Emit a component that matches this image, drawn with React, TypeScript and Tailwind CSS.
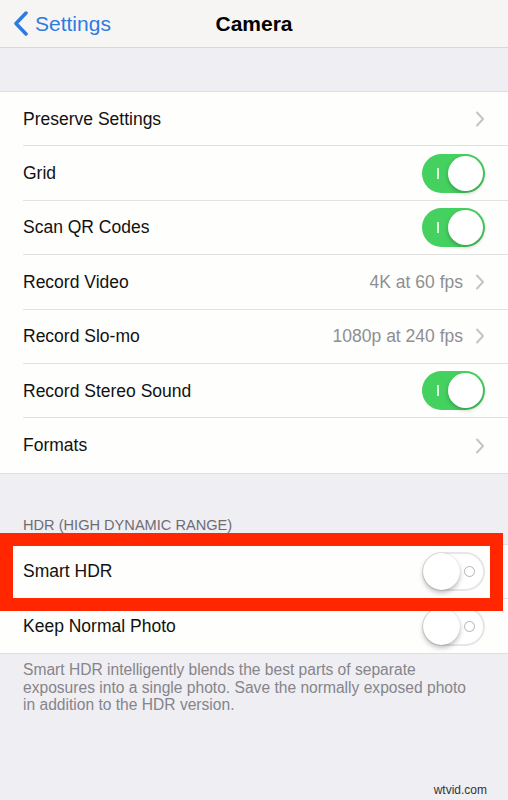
import React from 'react';

type Row = {
  label: string;
  kind: 'chevron' | 'on' | 'off';
  detail?: string;
};

const cameraRows: Row[] = [
  { label: 'Preserve Settings', kind: 'chevron' },
  { label: 'Grid', kind: 'on' },
  { label: 'Scan QR Codes', kind: 'on' },
  { label: 'Record Video', kind: 'chevron', detail: '4K at 60 fps' },
  { label: 'Record Slo-mo', kind: 'chevron', detail: '1080p at 240 fps' },
  { label: 'Record Stereo Sound', kind: 'on' },
  { label: 'Formats', kind: 'chevron' },
];

const hdrRows: Row[] = [
  { label: 'Smart HDR', kind: 'off' },
  { label: 'Keep Normal Photo', kind: 'off' },
];

function Chevron() {
  return (
    <svg width="10" height="16" viewBox="0 0 10 16" className="ml-[12px] shrink-0">
      <polyline points="2,1.5 8,8 2,14.5" fill="none" stroke="#c4c4c9" strokeWidth="2" strokeLinecap="round" strokeLinejoin="round" />
    </svg>
  );
}

function Toggle({ on }: { on: boolean }) {
  if (on) {
    return (
      <div className="flex h-[39px] w-[63px] shrink-0 items-center justify-between rounded-full bg-[#45d160] pl-[15px] pr-[2px]">
        <div className="h-[11px] w-[1.5px] bg-white/80" />
        <div className="h-[35px] w-[35px] rounded-full bg-white shadow-[0_2px_4px_rgba(0,0,0,0.25)]" />
      </div>
    );
  }
  return (
    <div className="flex h-[39px] w-[63px] shrink-0 items-center gap-[4px] rounded-full border-2 border-[#e6e6e6] bg-white">
      <div className="-ml-[1px] h-[37px] w-[37px] shrink-0 rounded-full bg-white shadow-[0_3px_5px_rgba(0,0,0,0.25),0_0_1px_rgba(0,0,0,0.2)]" />
      <div className="h-[11px] w-[11px] shrink-0 rounded-full border-[1.5px] border-[#b3b3b3]" />
    </div>
  );
}

function SettingsRow({ row, last }: { row: Row; last: boolean }) {
  return (
    <div className="bg-[#fefefc] pl-[23px]">
      <div
        className={`flex h-[54.4px] items-center pr-[23px] ${last ? '' : 'border-b border-[#e2e2e2]'}`}
      >
        <span className="flex-1 text-[17.5px] text-[#111]">{row.label}</span>
        {row.detail && <span className="text-[17.5px] text-[#8e8e93]">{row.detail}</span>}
        {row.kind === 'chevron' && <Chevron />}
        {row.kind === 'on' && <Toggle on />}
        {row.kind === 'off' && <Toggle on={false} />}
      </div>
    </div>
  );
}

export default function App() {
  return (
    <div
      className="relative flex min-h-[800px] w-[508px] flex-col overflow-hidden bg-[#efeef3]"
      style={{ fontFamily: '"Liberation Sans", Arial, sans-serif' }}
    >
      {/* nav bar */}
      <div className="grid h-[48px] grid-cols-[1fr_auto_1fr] items-center border-b border-[#d8d8d8] bg-[#f7f5f4]">
        <div className="flex items-center pl-[13px] text-[21px] text-[#2f7ae0]">
          <svg width="16" height="25" viewBox="0 0 16 25" className="mr-[6px]">
            <polyline points="13,2 3,12.5 13,23" fill="none" stroke="#2f7ae0" strokeWidth="3.5" strokeLinecap="round" strokeLinejoin="round" />
          </svg>
          Settings
        </div>
        <div className="text-[21px] font-semibold text-black">Camera</div>
        <div />
      </div>

      <div className="h-[43px]" />

      <div className="border-y border-[#dedede]">
        {cameraRows.map((row, i) => (
          <SettingsRow key={row.label} row={row} last={i === cameraRows.length - 1} />
        ))}
      </div>

      <div className="relative">
        <div className="px-[23px] pb-[7px] pt-[41px] text-[14.6px] uppercase text-[#6d6d72]">
          HDR (High Dynamic Range)
        </div>
        <div className="border-y border-[#dedede]">
          {hdrRows.map((row, i) => (
            <SettingsRow key={row.label} row={row} last={i === hdrRows.length - 1} />
          ))}
        </div>
        {/* red highlight drawn over the Smart HDR row */}
        <div className="absolute left-0 top-[59px] h-[78px] w-[503px] border-[13px] border-[#ff2600]" />
      </div>

      <p className="px-[23px] pt-[7px] text-[15.6px] leading-[17.5px] text-[#85858a]">
        Smart HDR intelligently blends the best parts of separate
        <br />
        exposures into a single photo. Save the normally exposed photo
        <br />
        in addition to the HDR version.
      </p>

      <div className="absolute bottom-[1px] right-[21px] text-[12px] text-[#333]">wtvid.com</div>
    </div>
  );
}
